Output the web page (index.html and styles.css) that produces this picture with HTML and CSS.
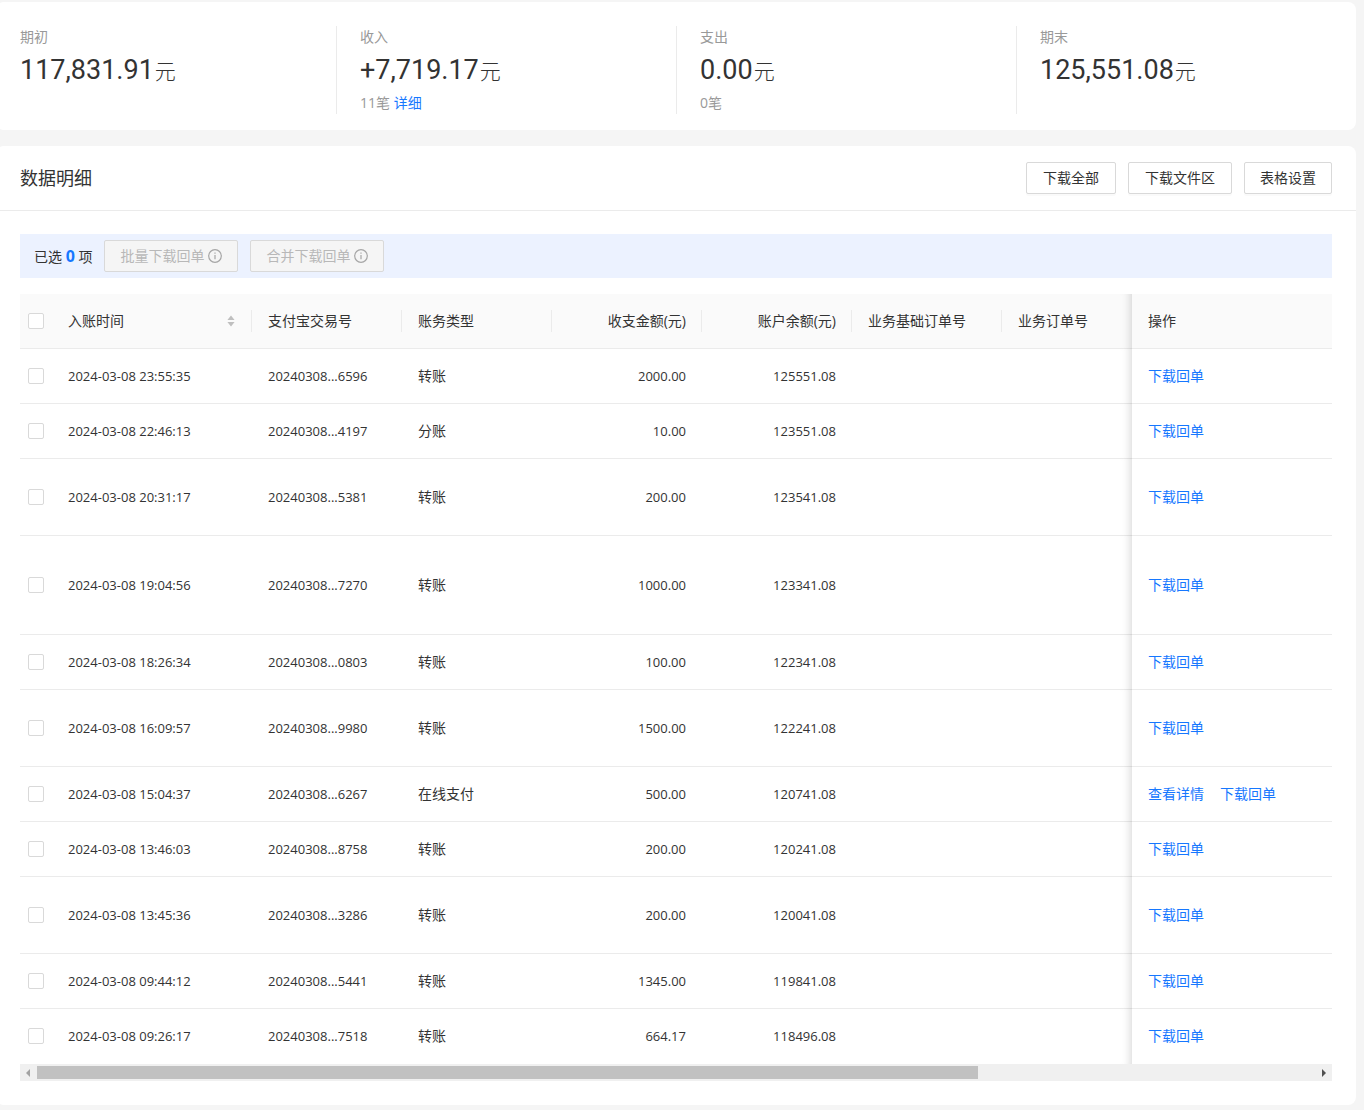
FILE: index.html
```
<!DOCTYPE html>
<html lang="zh-CN">

<head>
    <meta charset="UTF-8">
    <meta name="viewport" content="width=device-width, initial-scale=1.0">
    <title>账务明细</title>
    <link rel="stylesheet" href="styles.css">
</head>

<body>
<main class="page">

    <section class="card summary">
        <div class="stat">
            <div class="stat-label">期初</div>
            <div class="stat-value">117,831.91<span class="unit">元</span></div>
        </div>
        <div class="stat">
            <div class="stat-label">收入</div>
            <div class="stat-value">+7,719.17<span class="unit">元</span></div>
            <div class="stat-label">11笔 <a href="#">详细</a></div>
        </div>
        <div class="stat">
            <div class="stat-label">支出</div>
            <div class="stat-value">0.00<span class="unit">元</span></div>
            <div class="stat-label">0笔</div>
        </div>
        <div class="stat">
            <div class="stat-label">期末</div>
            <div class="stat-value">125,551.08<span class="unit">元</span></div>
        </div>
    </section>

    <section class="card">
        <header class="card-head">
            <h2>数据明细</h2>
            <div class="card-actions">
                <button type="button" class="btn">下载全部</button>
                <button type="button" class="btn">下载文件区</button>
                <button type="button" class="btn btn-narrow">表格设置</button>
            </div>
        </header>

        <div class="card-body">
            <div class="batch-bar">
                <span>已选 <b>0</b> 项</span>
                <button type="button" class="btn btn-narrow" disabled>批量下载回单
                    <svg class="info" viewBox="0 0 14 14"><circle cx="7" cy="7" r="6.3" /><path d="M7 6v4.2M7 3.6v1.2" /></svg>
                </button>
                <button type="button" class="btn btn-narrow" disabled>合并下载回单
                    <svg class="info" viewBox="0 0 14 14"><circle cx="7" cy="7" r="6.3" /><path d="M7 6v4.2M7 3.6v1.2" /></svg>
                </button>
            </div>

            <table>
                <colgroup>
                    <col class="col-check">
                    <col class="col-time">
                    <col class="col-data">
                    <col class="col-data">
                    <col class="col-data">
                    <col class="col-data">
                    <col class="col-data">
                    <col>
                    <col class="col-action">
                </colgroup>
                <thead>
                    <tr>
                        <th class="check"><input type="checkbox" aria-label="全选"></th>
                        <th class="split">
                            <div class="sorter">入账时间
                                <svg viewBox="0 0 8 12"><path d="M4 0.5L7.6 5H0.4zM4 11.5L7.6 7H0.4z" /></svg>
                            </div>
                        </th>
                        <th class="split">支付宝交易号</th>
                        <th class="split">账务类型</th>
                        <th class="split right">收支金额(元)</th>
                        <th class="split right">账户余额(元)</th>
                        <th class="split">业务基础订单号</th>
                        <th>业务订单号</th>
                        <th class="fixed">操作</th>
                    </tr>
                </thead>
                <tbody>
                    <tr>
                        <td class="check"><input type="checkbox" aria-label="选择 23:55:35"></td>
                        <td class="num">2024-03-08 23:55:35</td>
                        <td class="num">20240308...6596</td>
                        <td>转账</td>
                        <td class="num right">2000.00</td>
                        <td class="num right">125551.08</td>
                        <td></td>
                        <td></td>
                        <td class="fixed"><a href="#">下载回单</a></td>
                    </tr>
                    <tr>
                        <td class="check"><input type="checkbox" aria-label="选择 22:46:13"></td>
                        <td class="num">2024-03-08 22:46:13</td>
                        <td class="num">20240308...4197</td>
                        <td>分账</td>
                        <td class="num right">10.00</td>
                        <td class="num right">123551.08</td>
                        <td></td>
                        <td></td>
                        <td class="fixed"><a href="#">下载回单</a></td>
                    </tr>
                    <tr class="lines-2">
                        <td class="check"><input type="checkbox" aria-label="选择 20:31:17"></td>
                        <td class="num">2024-03-08 20:31:17</td>
                        <td class="num">20240308...5381</td>
                        <td>转账</td>
                        <td class="num right">200.00</td>
                        <td class="num right">123541.08</td>
                        <td></td>
                        <td></td>
                        <td class="fixed"><a href="#">下载回单</a></td>
                    </tr>
                    <tr class="lines-3">
                        <td class="check"><input type="checkbox" aria-label="选择 19:04:56"></td>
                        <td class="num">2024-03-08 19:04:56</td>
                        <td class="num">20240308...7270</td>
                        <td>转账</td>
                        <td class="num right">1000.00</td>
                        <td class="num right">123341.08</td>
                        <td></td>
                        <td></td>
                        <td class="fixed"><a href="#">下载回单</a></td>
                    </tr>
                    <tr>
                        <td class="check"><input type="checkbox" aria-label="选择 18:26:34"></td>
                        <td class="num">2024-03-08 18:26:34</td>
                        <td class="num">20240308...0803</td>
                        <td>转账</td>
                        <td class="num right">100.00</td>
                        <td class="num right">122341.08</td>
                        <td></td>
                        <td></td>
                        <td class="fixed"><a href="#">下载回单</a></td>
                    </tr>
                    <tr class="lines-2">
                        <td class="check"><input type="checkbox" aria-label="选择 16:09:57"></td>
                        <td class="num">2024-03-08 16:09:57</td>
                        <td class="num">20240308...9980</td>
                        <td>转账</td>
                        <td class="num right">1500.00</td>
                        <td class="num right">122241.08</td>
                        <td></td>
                        <td></td>
                        <td class="fixed"><a href="#">下载回单</a></td>
                    </tr>
                    <tr>
                        <td class="check"><input type="checkbox" aria-label="选择 15:04:37"></td>
                        <td class="num">2024-03-08 15:04:37</td>
                        <td class="num">20240308...6267</td>
                        <td>在线支付</td>
                        <td class="num right">500.00</td>
                        <td class="num right">120741.08</td>
                        <td></td>
                        <td></td>
                        <td class="fixed"><a href="#">查看详情</a><a href="#">下载回单</a></td>
                    </tr>
                    <tr>
                        <td class="check"><input type="checkbox" aria-label="选择 13:46:03"></td>
                        <td class="num">2024-03-08 13:46:03</td>
                        <td class="num">20240308...8758</td>
                        <td>转账</td>
                        <td class="num right">200.00</td>
                        <td class="num right">120241.08</td>
                        <td></td>
                        <td></td>
                        <td class="fixed"><a href="#">下载回单</a></td>
                    </tr>
                    <tr class="lines-2">
                        <td class="check"><input type="checkbox" aria-label="选择 13:45:36"></td>
                        <td class="num">2024-03-08 13:45:36</td>
                        <td class="num">20240308...3286</td>
                        <td>转账</td>
                        <td class="num right">200.00</td>
                        <td class="num right">120041.08</td>
                        <td></td>
                        <td></td>
                        <td class="fixed"><a href="#">下载回单</a></td>
                    </tr>
                    <tr>
                        <td class="check"><input type="checkbox" aria-label="选择 09:44:12"></td>
                        <td class="num">2024-03-08 09:44:12</td>
                        <td class="num">20240308...5441</td>
                        <td>转账</td>
                        <td class="num right">1345.00</td>
                        <td class="num right">119841.08</td>
                        <td></td>
                        <td></td>
                        <td class="fixed"><a href="#">下载回单</a></td>
                    </tr>
                    <tr>
                        <td class="check"><input type="checkbox" aria-label="选择 09:26:17"></td>
                        <td class="num">2024-03-08 09:26:17</td>
                        <td class="num">20240308...7518</td>
                        <td>转账</td>
                        <td class="num right">664.17</td>
                        <td class="num right">118496.08</td>
                        <td></td>
                        <td></td>
                        <td class="fixed"><a href="#">下载回单</a></td>
                    </tr>
                </tbody>
            </table>

            <div class="scrollbar">
                <svg class="arrow start" viewBox="0 0 17 17"><path d="M10 5v8L6 9z" /></svg>
                <div class="track"><div class="thumb"></div></div>
                <svg class="arrow" viewBox="0 0 17 17"><path d="M7 5v8l4-4z" /></svg>
            </div>
        </div>
    </section>

</main>
</body>

</html>
```
FILE: styles.css
```
* {
    box-sizing: border-box;
}

body {
    margin: 0;
    background-color: #f5f5f5;
    color: #333;
    font-family: "Open Sans", "Noto Sans CJK SC", sans-serif;
    font-size: 14px;
    line-height: 22px;
    overflow-x: hidden;
}

a {
    color: #1677ff;
    text-decoration: none;
}

.page {
    display: flex;
    flex-direction: column;
    gap: 16px;
    margin: 0 8px 0 -4px;
    padding: 2px 0 5px;
}

.card {
    background-color: #fff;
    border-radius: 8px;
}

/* summary */
.summary {
    display: grid;
    grid-template-columns: repeat(4, 1fr);
    padding: 24px 0 16px;
}

.stat {
    padding-left: 23px;
    border-left: 1px solid #ebebeb;
}

.stat:first-child {
    border-color: transparent;
}

.stat-label {
    color: #999;
}

.stat-value {
    font-family: Roboto, "Noto Sans CJK SC", sans-serif;
    font-size: 27px;
    line-height: 44px;
}

.unit {
    margin-left: 1px;
    font-size: 21px;
    font-weight: 300;
    line-height: 22px;
}

/* details card */
.card-head {
    display: flex;
    align-items: center;
    justify-content: space-between;
    padding: 16px 24px;
    border-bottom: 1px solid #ebebeb;
}

.card-head h2 {
    margin: 0;
    font-size: 18px;
    font-weight: 400;
    line-height: 32px;
}

.card-actions {
    display: flex;
    gap: 12px;
}

.btn {
    display: flex;
    align-items: center;
    gap: 4px;
    height: 32px;
    padding: 0 16px;
    border: 1px solid #d9d9d9;
    border-radius: 2px;
    background-color: #fff;
    box-shadow: 0 2px 0 rgba(0, 0, 0, 0.02);
    color: #333;
    font: inherit;
    white-space: nowrap;
    cursor: pointer;
}

.btn-narrow {
    padding: 0 15px;
}

.btn:disabled {
    background-color: #f5f5f5;
    box-shadow: none;
    color: #b8b8b8;
    cursor: not-allowed;
}

.info {
    width: 14px;
    height: 14px;
    fill: none;
    stroke: #a6a6a6;
    stroke-width: 1.2;
}

.card-body {
    padding: 23px 24px 24px;
}

.batch-bar {
    display: flex;
    align-items: center;
    gap: 12px;
    height: 44px;
    margin-bottom: 16px;
    padding-left: 14px;
    background-color: #ecf2ff;
}

.batch-bar b {
    color: #1677ff;
    font-size: 16px;
}

/* table */
table {
    width: 100%;
    table-layout: fixed;
    border-collapse: separate;
    border-spacing: 0;
}

.col-check {
    width: 32px;
}

.col-time,
.col-action {
    width: 200px;
}

.col-data {
    width: 150px;
}

th,
td {
    position: relative;
    height: 55px;
    padding: 0 16px;
    border-bottom: 1px solid #ebebeb;
    font-weight: 400;
    text-align: left;
    white-space: nowrap;
}

th {
    background-color: #fafafa;
}

tbody tr:last-child td {
    border-bottom-color: transparent;
}

.lines-2 td {
    height: 77px;
}

.lines-3 td {
    height: 99px;
}

.split::before {
    content: "";
    position: absolute;
    top: 16px;
    right: 0;
    width: 1px;
    height: 22px;
    background-color: #ebebeb;
}

.num {
    font-size: 13px;
}

.right {
    text-align: right;
}

.check {
    padding: 0 8px;
}

input[type="checkbox"] {
    display: block;
    appearance: none;
    width: 16px;
    height: 16px;
    margin: 0;
    border: 1px solid #d9d9d9;
    border-radius: 2px;
    background-color: #fff;
}

.sorter {
    display: flex;
    align-items: center;
    justify-content: space-between;
}

.sorter svg {
    width: 8px;
    height: 12px;
    margin-right: 1px;
    fill: #bfbfbf;
}

.fixed::after {
    content: "";
    position: absolute;
    top: 0;
    bottom: -1px;
    right: 100%;
    width: 30px;
    box-shadow: inset -10px 0 8px -8px rgba(0, 0, 0, 0.15);
    pointer-events: none;
}

.fixed a + a {
    margin-left: 16px;
}

/* horizontal scrollbar */
.scrollbar {
    display: flex;
    height: 17px;
    background-color: #f0f0f0;
}

.arrow {
    width: 17px;
    fill: #505050;
}

.arrow.start {
    fill: #a3a3a3;
}

.track {
    flex: 1;
    padding: 2px 0;
}

.thumb {
    width: 73.6%;
    height: 13px;
    background-color: #c1c1c1;
}
```
